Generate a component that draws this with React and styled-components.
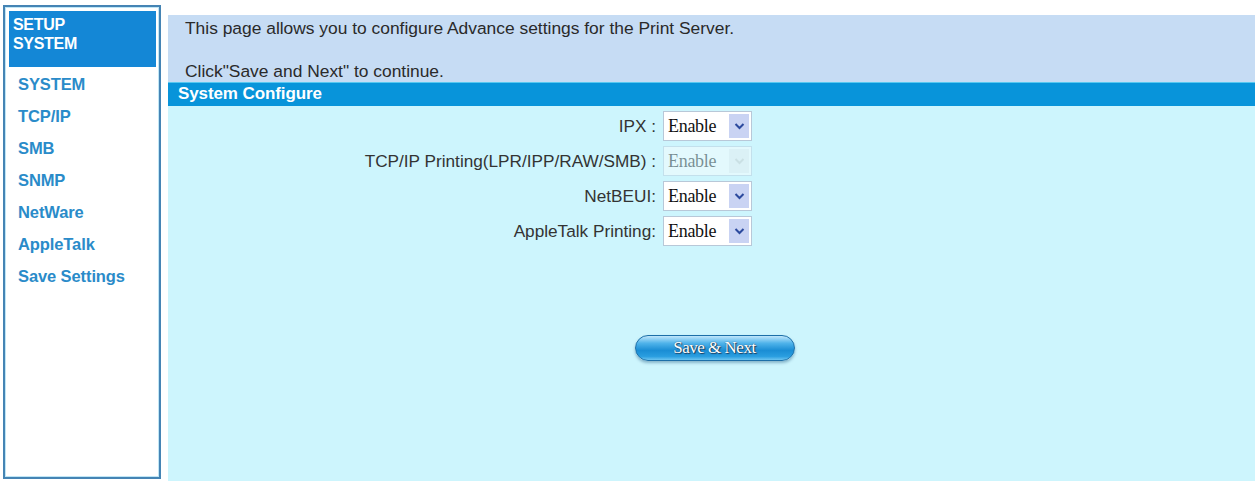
import React from "react";
import styled, { createGlobalStyle } from "styled-components";

const Global = createGlobalStyle`
  html, body { margin: 0; padding: 0; background: #ffffff; }
  body { font-family: "Liberation Sans", Arial, sans-serif; }
`;

const Page = styled.div`
  display: flex;
  align-items: flex-start;
  width: 1257px;
  height: 481px;
  overflow: hidden;
  background: #fff;
`;

const Sidebar = styled.nav`
  box-sizing: border-box;
  width: 158px;
  height: 474px;
  margin: 5px 0 0 3px;
  border: 2px solid #4584b4;
  box-shadow: inset 0 0 0 1px #bfe6f6;
  padding: 4px 3px 0 4px;
  background: #fff;
  display: flex;
  flex-direction: column;
`;

const SideHeader = styled.div`
  background: #1487d6;
  height: 56px;
  box-sizing: border-box;
  padding: 4px 0 0 4px;
  color: #fff;
  font-weight: bold;
  font-size: 16px;
  line-height: 19px;
  letter-spacing: -0.3px;
`;

const NavList = styled.ul`
  list-style: none;
  margin: 7px 0 0;
  padding: 0 0 0 9px;
  display: flex;
  flex-direction: column;
  gap: 12px;
`;

const NavItem = styled.li`
  font-weight: bold;
  font-size: 16.5px;
  line-height: 20px;
  color: #2a8bc9;
  letter-spacing: -0.1px;
`;

const Main = styled.main`
  flex: 1;
  margin: 15px 2px 0 7px;
  height: 466px;
  display: flex;
  flex-direction: column;
  background: #cdf5fd;
`;

const Intro = styled.div`
  background: #c6dcf4;
  height: 67px;
  box-sizing: border-box;
  padding: 3px 0 0 17px;
  display: flex;
  flex-direction: column;
  gap: 23px;
  color: #2a2a2a;
  font-size: 17.4px;
  line-height: 20px;
`;

const TitleBar = styled.div`
  background: #0894da;
  height: 24px;
  box-sizing: border-box;
  border-top: 1px solid #58c8f0;
  padding: 1px 0 0 10px;
  color: #fff;
  font-weight: bold;
  font-size: 17px;
  line-height: 20px;
  letter-spacing: -0.1px;
`;

const Form = styled.div`
  display: grid;
  grid-template-columns: 488px auto;
  column-gap: 7px;
  row-gap: 5px;
  justify-content: start;
  align-items: center;
  padding-top: 5px;
`;

const Label = styled.div`
  text-align: right;
  color: #333;
  font-size: 17.2px;
  line-height: 20px;
`;

const Select = styled.div`
  box-sizing: border-box;
  width: 89px;
  height: 30px;
  border: 1px solid #b8c8d8;
  background: #fff;
  display: flex;
  align-items: center;
  padding: 2px;
  opacity: ${(p) => (p.$disabled ? 0.45 : 1)};
`;

const SelectText = styled.span`
  flex: 1;
  padding-left: 2px;
  font-family: "Liberation Serif", "Times New Roman", serif;
  font-size: 18px;
  color: #111;
  letter-spacing: -0.3px;
`;

const Arrow = styled.span`
  width: 20px;
  align-self: stretch;
  background: ${(p) => (p.$disabled ? "#eeeeee" : "#c9d3f3")};
  display: flex;
  align-items: center;
  justify-content: center;
`;

const ButtonRow = styled.div`
  display: flex;
  justify-content: center;
  padding: 89px 0 0 6px;
`;

const PillButton = styled.button`
  width: 160px;
  height: 26px;
  border-radius: 13px;
  border: 1px solid #1d6fa8;
  background: linear-gradient(
    to bottom,
    #bfe6fb 0%,
    #4fb3ea 30%,
    #1a8dd4 60%,
    #2a9ee0 85%,
    #6cc4f0 100%
  );
  box-shadow: 0 2px 3px rgba(0, 60, 110, 0.35);
  color: #fff;
  font-family: "Liberation Serif", "Times New Roman", serif;
  font-size: 17px;
  line-height: 22px;
  letter-spacing: -0.5px;
  text-shadow: 0 0 1px #1b3c5c, 1px 1px 1px #1b3c5c;
  cursor: pointer;
  padding: 0;
`;

function Chevron({ disabled }) {
  return (
    <svg width="11" height="8" viewBox="0 0 11 8">
      <path
        d="M1.5 2 L5.5 6 L9.5 2"
        fill="none"
        stroke={disabled ? "#c8c8c8" : "#2c4a9e"}
        strokeWidth="2"
      />
    </svg>
  );
}

function Dropdown({ disabled }) {
  return (
    <Select $disabled={disabled}>
      <SelectText>Enable</SelectText>
      <Arrow $disabled={disabled}>
        <Chevron disabled={disabled} />
      </Arrow>
    </Select>
  );
}

const navItems = [
  "SYSTEM",
  "TCP/IP",
  "SMB",
  "SNMP",
  "NetWare",
  "AppleTalk",
  "Save Settings",
];

const fields = [
  { label: "IPX :" },
  { label: "TCP/IP Printing(LPR/IPP/RAW/SMB) :", disabled: true },
  { label: "NetBEUI:" },
  { label: "AppleTalk Printing:" },
];

export default function App() {
  return (
    <>
      <Global />
      <Page>
        <Sidebar>
          <SideHeader>
            SETUP
            <br />
            SYSTEM
          </SideHeader>
          <NavList>
            {navItems.map((n) => (
              <NavItem key={n}>{n}</NavItem>
            ))}
          </NavList>
        </Sidebar>
        <Main>
          <Intro>
            <span>This page allows you to configure Advance settings for the Print Server.</span>
            <span>Click"Save and Next" to continue.</span>
          </Intro>
          <TitleBar>System Configure</TitleBar>
          <Form>
            {fields.map((f) => (
              <React.Fragment key={f.label}>
                <Label>{f.label}</Label>
                <Dropdown disabled={f.disabled} />
              </React.Fragment>
            ))}
          </Form>
          <ButtonRow>
            <PillButton>Save &amp; Next</PillButton>
          </ButtonRow>
        </Main>
      </Page>
    </>
  );
}
